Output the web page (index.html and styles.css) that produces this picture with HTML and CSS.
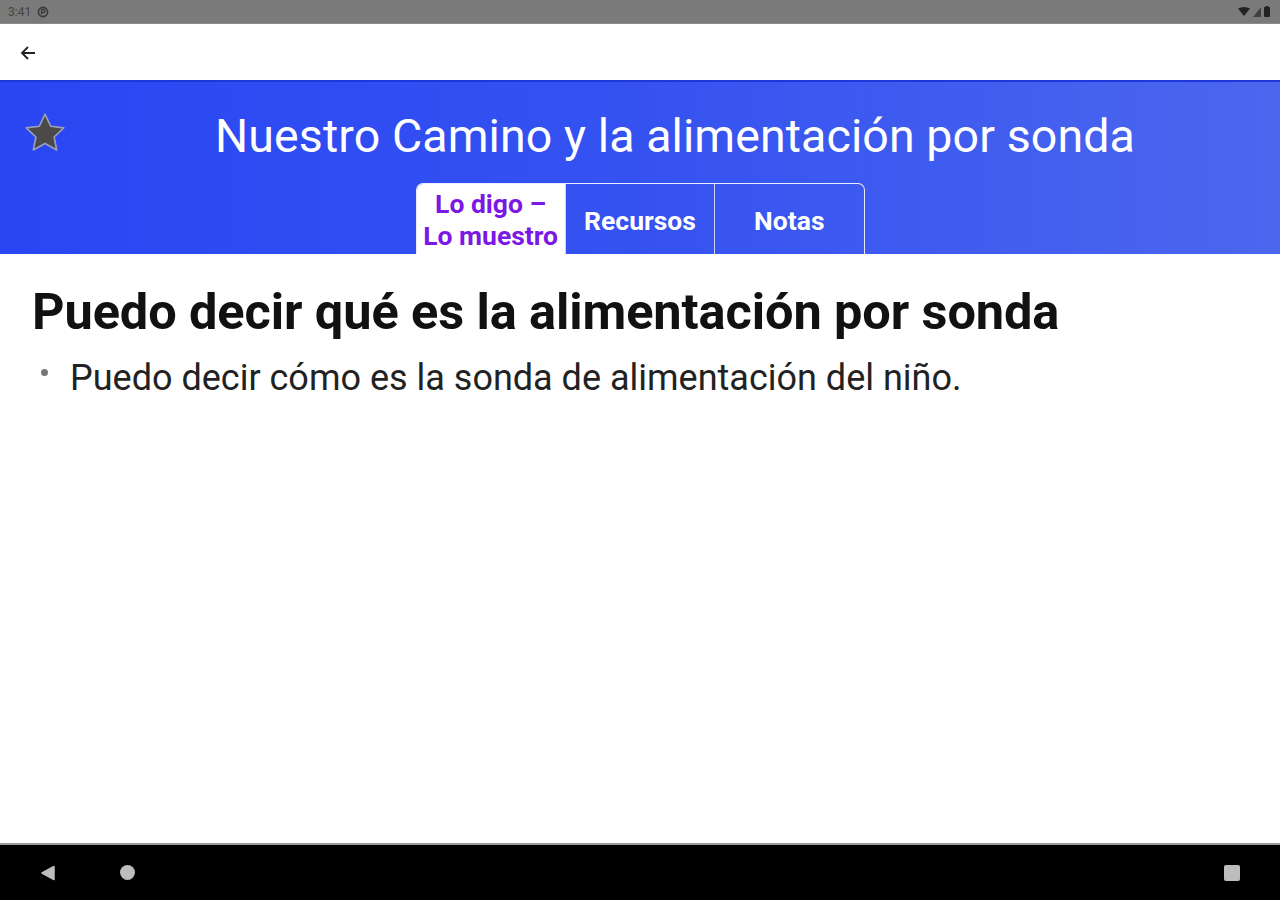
FILE: index.html
```html
<!DOCTYPE html>
<html lang="es">
<head>
<meta charset="utf-8">
<link rel="stylesheet" href="styles.css">
</head>
<body>
<div class="screen">
  <div class="statusbar">
    <div class="status-left">
      <span class="time">3:41</span>
      <svg class="status-icon" width="12" height="12" viewBox="0 0 12 12"><circle cx="6" cy="6" r="4.6" fill="none" stroke="#3a3a3a" stroke-width="1.6"/><path d="M4.5 3.5v5M4.5 3.5h2a1.5 1.5 0 0 1 0 3h-2" fill="none" stroke="#3a3a3a" stroke-width="1.3"/></svg>
    </div>
    <div class="status-right">
      <svg width="12" height="10" viewBox="0 0 12 10"><path d="M0 1.5Q6 -1.5 12 1.5L6 9Z" fill="#222"/></svg>
      <svg width="8" height="10" viewBox="0 0 8 10"><path d="M8 0V10H0Z" fill="#333" opacity="0.8"/></svg>
      <svg width="6" height="11" viewBox="0 0 6 11"><rect x="0" y="1" width="6" height="10" rx="1" fill="#222"/><rect x="1.5" y="0" width="3" height="1.5" fill="#222"/></svg>
    </div>
  </div>
  <div class="appbar">
    <svg class="back" width="16" height="16" viewBox="0 0 16 16"><path d="M15 8H2M8 2L2 8l6 6" fill="none" stroke="#222" stroke-width="1.8"/></svg>
  </div>
  <header class="hero">
    <div class="hero-top">
      <svg class="star" width="44" height="42" viewBox="0 0 24 23"><path d="M12 1.2l3.1 6.6 7.2.9-5.3 5 1.4 7.1L12 17.3l-6.4 3.5 1.4-7.1-5.3-5 7.2-.9z" fill="#4a4a4a" stroke="#9aa0b8" stroke-width="0.9" stroke-linejoin="round"/></svg>
      <h1 class="title">Nuestro Camino y la alimentación por sonda</h1>
    </div>
    <nav class="tabs">
      <div class="tab active">Lo digo –<br>Lo muestro</div>
      <div class="tab">Recursos</div>
      <div class="tab">Notas</div>
    </nav>
  </header>
  <main class="content">
    <h2 class="heading">Puedo decir qué es la alimentación por sonda</h2>
    <ul class="list">
      <li>Puedo decir cómo es la sonda de alimentación del niño.</li>
    </ul>
  </main>
  <div class="navbar">
    <div class="nav-left">
      <svg width="16" height="16" viewBox="0 0 16 16"><path d="M14 1.5V14.5L2 8Z" fill="#bdbdbd" stroke="#bdbdbd" stroke-width="1.5" stroke-linejoin="round"/></svg>
      <span class="home"></span>
    </div>
    <span class="recent"></span>
  </div>
</div>
</body>
</html>
```

FILE: styles.css
```css
* { box-sizing: border-box; }
html, body { margin: 0; padding: 0; }
body {
  width: 1280px;
  height: 900px;
  overflow: hidden;
  font-family: Roboto, "Noto Sans", "Liberation Sans", sans-serif;
  background: #fff;
}
.screen {
  display: flex;
  flex-direction: column;
  height: 900px;
}
.statusbar {
  height: 24px;
  background: #7a7a7a;
  display: flex;
  align-items: center;
  justify-content: space-between;
  padding: 0 10px 0 8px;
  border-bottom: 1px solid #8a8a8a;
}
.status-left, .status-right {
  display: flex;
  align-items: center;
  gap: 6px;
}
.status-right { gap: 3px; }
.time {
  font-size: 12px;
  color: #444;
}
.appbar {
  height: 56px;
  background: #fff;
  display: flex;
  align-items: center;
  padding-left: 20px;
  padding-top: 1px;
}
.hero {
  height: 174px;
  background: linear-gradient(90deg, #2a46f3 0%, #3552f1 50%, #4b67ee 100%);
  border-top: 2px solid #1d37d8;
  display: flex;
  flex-direction: column;
}
.hero-top {
  height: 101px;
  display: flex;
  align-items: center;
  position: relative;
  padding-top: 6px;
}
.star {
  position: absolute;
  left: 23px;
  top: 30px;
}
.title {
  flex: 1;
  margin: 0;
  padding-left: 70px;
  text-align: center;
  color: #fff;
  font-weight: 400;
  font-size: 46.5px;
  letter-spacing: 0.1px;
}
.tabs {
  align-self: center;
  display: flex;
  height: 71px;
  width: 449px;
  border: 1.5px solid #e8ecff;
  border-bottom: none;
  border-radius: 7px 7px 0 0;
  overflow: hidden;
}
.tab {
  flex: 1;
  display: flex;
  align-items: center;
  justify-content: center;
  text-align: center;
  color: #fff;
  font-weight: 700;
  font-size: 26.5px;
  line-height: 32px;
  border-left: 1.5px solid #c9d2ff;
  padding-top: 4px;
}
.tab:first-child { border-left: none; }
.tab.active {
  background: #fff;
  color: #7b18e6;
  padding-top: 1px;
}
.content {
  flex: 1;
  padding: 28px 32px;
}
.heading {
  margin: 0;
  font-size: 50.5px;
  font-weight: 700;
  color: #111;
  letter-spacing: -0.1px;
}
.list {
  margin: 17px 0 0;
  padding: 0 0 0 38px;
  list-style: none;
}
.list li {
  position: relative;
  font-size: 36px;
  color: #222;
  line-height: 40px;
}
.list li::before {
  content: "";
  position: absolute;
  left: -29px;
  top: 11px;
  width: 7px;
  height: 7px;
  border-radius: 50%;
  background: #777;
}
.navbar {
  height: 57px;
  background: #000;
  border-top: 2px solid #9a9a9a;
  display: flex;
  align-items: center;
  justify-content: space-between;
  padding: 0 40px;
}
.nav-left {
  display: flex;
  align-items: center;
  gap: 64px;
}
.home {
  width: 15px;
  height: 15px;
  border-radius: 50%;
  background: #bdbdbd;
}
.recent {
  width: 16px;
  height: 16px;
  border-radius: 2px;
  background: #bdbdbd;
}
```
